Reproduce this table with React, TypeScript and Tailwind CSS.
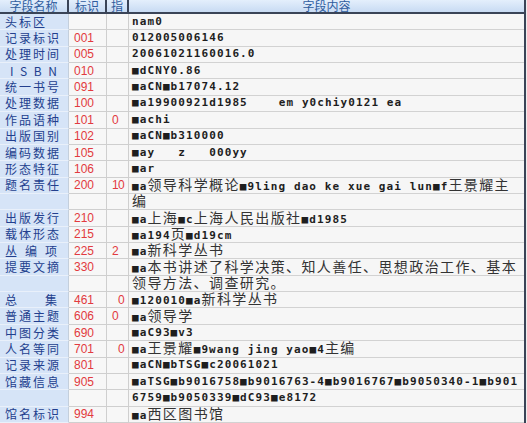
import React from 'react';

type Row = { name: string; id: string; ind: string; text: string; spread?: 'full' | 'isbn' };

const rows: Row[] = [
  { name: '头标区', id: '', ind: '', text: 'nam0' },
  { name: '记录标识', id: '001', ind: '', text: '012005006146' },
  { name: '处理时间', id: '005', ind: '', text: '20061021160016.0' },
  { name: 'ISBN', id: '010', ind: '', text: '■dCNY0.86', spread: 'isbn' },
  { name: '统一书号', id: '091', ind: '', text: '■aCN■b17074.12' },
  { name: '处理数据', id: '100', ind: '', text: '■a19900921d1985    em y0chiy0121 ea' },
  { name: '作品语种', id: '101', ind: '0 ', text: '■achi' },
  { name: '出版国别', id: '102', ind: '', text: '■aCN■b310000' },
  { name: '编码数据', id: '105', ind: '', text: '■ay   z   000yy' },
  { name: '形态特征', id: '106', ind: '', text: '■ar' },
  { name: '题名责任', id: '200', ind: '10', text: '■a领导科学概论■9ling dao ke xue gai lun■f王景耀主' },
  { name: '', id: '', ind: '', text: '编' },
  { name: '出版发行', id: '210', ind: '', text: '■a上海■c上海人民出版社■d1985' },
  { name: '载体形态', id: '215', ind: '', text: '■a194页■d19cm' },
  { name: '丛编项', id: '225', ind: '2 ', text: '■a新科学丛书', spread: 'full' },
  { name: '提要文摘', id: '330', ind: '', text: '■a本书讲述了科学决策、知人善任、思想政治工作、基本' },
  { name: '', id: '', ind: '', text: '领导方法、调查研究。' },
  { name: '总集', id: '461', ind: ' 0', text: '■120010■a新科学丛书', spread: 'full' },
  { name: '普通主题', id: '606', ind: '0 ', text: '■a领导学' },
  { name: '中图分类', id: '690', ind: '', text: '■aC93■v3' },
  { name: '人名等同', id: '701', ind: ' 0', text: '■a王景耀■9wang jing yao■4主编' },
  { name: '记录来源', id: '801', ind: '', text: '■aCN■bTSG■c20061021' },
  { name: '馆藏信息', id: '905', ind: '', text: '■aTSG■b9016758■b9016763-4■b9016767■b9050340-1■b901' },
  { name: '', id: '', ind: '', text: '6759■b9050339■dC93■e8172' },
  { name: '馆名标识', id: '994', ind: '', text: '■a西区图书馆' },
];

const CJK = /([\u3000-\u303f\u4e00-\u9fff\uff00-\uffef]+)/;

function Content({ text }: { text: string }) {
  const parts = text.split(CJK);
  return (
    <span className="whitespace-pre">
      {parts.map((p, i) =>
        i % 2 === 1 ? (
          <span key={i} className="[font-family:'Noto_Sans_CJK_SC',sans-serif] font-normal text-[14px] leading-[14px] tracking-[1.4px] text-[#333]">
            {p}
          </span>
        ) : (
          <span key={i}>{p}</span>
        )
      )}
    </span>
  );
}

function Name({ row }: { row: Row }) {
  if (row.spread) {
    const chars = row.name.split('');
    return (
      <div className={`flex justify-between ${row.spread === 'isbn' ? 'ml-[10px] w-[47px]' : 'ml-[5px] w-[52px]'}`}>
        {chars.map((c, i) => (
          <span key={i}>{c}</span>
        ))}
      </div>
    );
  }
  return <span className="pl-[5px] tracking-[2px]">{row.name}</span>;
}

export default function App() {
  return (
    <div className="w-[527px] h-[423px] overflow-hidden bg-[#eeeeee]">
      <div className="w-[526px] border-r-2 border-[#3a4457] bg-[#f6f6f6]">
        {/* header */}
        <div className="flex h-[14px] border-b-2 border-[#3a4457] bg-gradient-to-b from-[#e4effc] to-[#c8dbf3] text-[#2f5c9e] text-[12px] leading-[12px] [font-family:'Noto_Sans_CJK_SC',sans-serif]">
          <div className="w-[69px] border-r-2 border-[#3a4457] flex items-center justify-center">字段名称</div>
          <div className="w-[38px] border-r-2 border-[#3a4457] flex items-center justify-center">标识</div>
          <div className="w-[22px] border-r-2 border-[#3a4457] flex items-center justify-center">指</div>
          <div className="flex-1 flex items-center justify-center">字段内容</div>
        </div>
        {rows.map((r, i) => (
          <div key={i} className="flex h-[16.36px]">
            <div className="w-[69px] shrink-0 flex items-center bg-[#d6e4f7] border-r border-b border-r-[#c4cfdc] border-b-[#e9f0fa] text-[#233f8e] text-[12px] leading-none [font-family:'Noto_Sans_CJK_SC',sans-serif]">
              <Name row={r} />
            </div>
            <div className="w-[38px] shrink-0 flex items-center pl-[5px] bg-[#f7f7f7] border-r border-b border-[#cfcfcf] text-[#e23a40] text-[12px] leading-none [font-family:'Liberation_Sans',sans-serif]">
              {r.id}
            </div>
            <div className="w-[22px] shrink-0 flex items-center pl-[5px] bg-[#f7f7f7] border-r border-b border-[#cfcfcf] text-[#e23a40] text-[12px] leading-none [font-family:'Liberation_Sans',sans-serif]">
              {r.ind.split('').map((c, j) => (
                <span key={j} className="w-[6px] inline-block">{c === ' ' ? '' : c}</span>
              ))}
            </div>
            <div className="flex-1 flex items-center pl-[3px] border-b border-[#d2d2d2] text-[#1e1e1e] text-[11px] font-bold tracking-[1.1px] leading-[14px] [font-family:'DejaVu_Sans_Mono',monospace] overflow-hidden">
              <Content text={r.text} />
            </div>
          </div>
        ))}
      </div>
    </div>
  );
}
